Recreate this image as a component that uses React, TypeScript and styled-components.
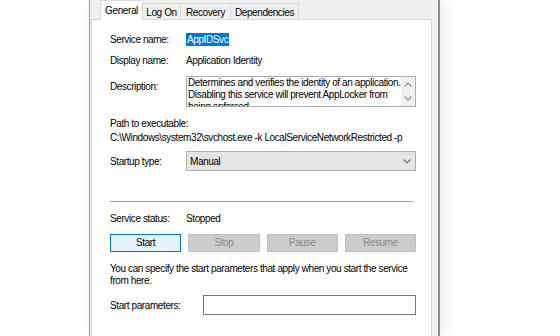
import React from "react";
import styled, { createGlobalStyle } from "styled-components";

const Global = createGlobalStyle`
  html, body { margin: 0; padding: 0; background: #ffffff; }
  body {
    font-family: "Liberation Sans", Arial, sans-serif;
    font-size: 10px;
    letter-spacing: -0.4px;
    color: #000;
  }
`;

const Window = styled.div`
  box-sizing: border-box;
  margin-left: 89px;
  width: 351px;
  height: 336px;
  border-left: 1px solid #9a9a9a;
  border-right: 2px solid #8c8c8c;
  padding: 0 6px 0 1px;
  background: #f0f0f0;
  display: flex;
  flex-direction: column;
  box-shadow: 6px 0 14px rgba(0, 0, 0, 0.07);
`;

const TabStrip = styled.div`
  display: flex;
  align-items: flex-end;
  height: 19px;
  padding-left: 9px;
  position: relative;
  z-index: 1;
`;

const Tab = styled.div<{ $active?: boolean; $w: number }>`
  box-sizing: border-box;
  width: ${(p) => p.$w}px;
  height: ${(p) => (p.$active ? 20 : 16)}px;
  margin-bottom: ${(p) => (p.$active ? -1 : 0)}px;
  border: 1px solid #d9d9d9;
  border-bottom: none;
  background: ${(p) => (p.$active ? "#ffffff" : "#f0f0f0")};
  text-align: center;
  padding-top: ${(p) => (p.$active ? 1 : 1)}px;
  line-height: ${(p) => (p.$active ? 18 : 15)}px;
  white-space: nowrap;
  position: relative;
  z-index: ${(p) => (p.$active ? 2 : 1)};
  & + & { margin-left: -1px; }
`;

const Panel = styled.div`
  flex: 1;
  background: #ffffff;
  border: 1px solid #d9d9d9;
  border-bottom: none;
  padding: 13px 15px 0 18px;
  display: flex;
  flex-direction: column;
`;

const Row = styled.div<{ $top: number; $label?: number; $start?: boolean }>`
  display: grid;
  grid-template-columns: ${(p) => p.$label ?? 76}px 1fr;
  align-items: ${(p) => (p.$start ? "start" : "center")};
  margin-top: ${(p) => p.$top}px;
  min-height: 13px;
`;

const Label = styled.div<{ $offset?: number }>`
  line-height: 13px;
  white-space: nowrap;
  margin-top: ${(p) => p.$offset ?? 0}px;
`;

const Value = styled.div`
  line-height: 13px;
  white-space: nowrap;
`;

const Selected = styled.span`
  display: inline-block;
  background: #0078d7;
  color: #ffffff;
  padding: 0 1px;
  line-height: 13px;
`;

const DescBox = styled.div`
  box-sizing: border-box;
  height: 31px;
  border: 1px solid #abadb3;
  display: flex;
  background: #ffffff;
`;

const DescText = styled.div`
  flex: 1;
  overflow: hidden;
  padding: 0 0 0 1px;
  line-height: 12px;
  white-space: nowrap;
`;

const ScrollBar = styled.div`
  width: 14px;
  background: #f0f0f0;
  display: flex;
  flex-direction: column;
`;

const ScrollBtn = styled.div`
  flex: 1;
  display: flex;
  align-items: center;
  justify-content: center;
`;

const TextLine = styled.div<{ $top?: number }>`
  line-height: 13px;
  white-space: nowrap;
  margin-top: ${(p) => p.$top ?? 0}px;
`;

const Combo = styled.div`
  box-sizing: border-box;
  height: 20px;
  background: #e5e5e5;
  border: 1px solid #adadad;
  display: flex;
  align-items: center;
  justify-content: space-between;
  padding: 0 4px 0 3px;
  line-height: 13px;
`;

const Separator = styled.div`
  height: 1px;
  background: #a0a0a0;
  margin: 30px 3px 0 0;
`;

const ButtonRow = styled.div`
  display: grid;
  grid-template-columns: repeat(4, 1fr);
  column-gap: 7px;
  margin-top: 9px;
`;

const Button = styled.div<{ $disabled?: boolean }>`
  box-sizing: border-box;
  height: 18px;
  line-height: 16px;
  text-align: center;
  border: 1px solid ${(p) => (p.$disabled ? "#bfbfbf" : "#0078d7")};
  background: ${(p) => (p.$disabled ? "#cccccc" : "#e5f1fb")};
  color: ${(p) => (p.$disabled ? "#8a8a8a" : "#000000")};
`;

const Para = styled.p`
  margin: 11px 0 0 0;
  line-height: 12px;
  white-space: nowrap;
`;

const Input = styled.div`
  box-sizing: border-box;
  height: 20px;
  border: 1px solid #7a7a7a;
  background: #ffffff;
`;

const Chevron = ({ up, color = "#707070" }: { up?: boolean; color?: string }) => (
  <svg width="8" height="5" viewBox="0 0 8 5">
    <polyline
      points={up ? "0.5,4.5 4,1 7.5,4.5" : "0.5,0.5 4,4 7.5,0.5"}
      fill="none"
      stroke={color}
      strokeWidth="1.1"
    />
  </svg>
);

export default function App() {
  return (
    <>
      <Global />
      <Window>
        <TabStrip>
          <Tab $active $w={43}>General</Tab>
          <Tab $w={39}>Log On</Tab>
          <Tab $w={51}>Recovery</Tab>
          <Tab $w={69}>Dependencies</Tab>
        </TabStrip>
        <Panel>
          <Row $top={0}>
            <Label>Service name:</Label>
            <Value>
              <Selected>AppIDSvc</Selected>
            </Value>
          </Row>
          <Row $top={8}>
            <Label>Display name:</Label>
            <Value>Application Identity</Value>
          </Row>
          <Row $top={9} $start>
            <Label $offset={4}>Description:</Label>
            <DescBox>
              <DescText>
                Determines and verifies the identity of an application.
                <br />
                Disabling this service will prevent AppLocker from
                <br />
                being enforced.
              </DescText>
              <ScrollBar>
                <ScrollBtn>
                  <Chevron up color="#8a8a8a" />
                </ScrollBtn>
                <ScrollBtn>
                  <Chevron color="#8a8a8a" />
                </ScrollBtn>
              </ScrollBar>
            </DescBox>
          </Row>
          <TextLine $top={10}>Path to executable:</TextLine>
          <TextLine $top={1}>C:\Windows\system32\svchost.exe -k LocalServiceNetworkRestricted -p</TextLine>
          <Row $top={7}>
            <Label>Startup type:</Label>
            <Combo>
              <span>Manual</span>
              <Chevron />
            </Combo>
          </Row>
          <Separator />
          <Row $top={10}>
            <Label>Service status:</Label>
            <Value>Stopped</Value>
          </Row>
          <ButtonRow>
            <Button>Start</Button>
            <Button $disabled>Stop</Button>
            <Button $disabled>Pause</Button>
            <Button $disabled>Resume</Button>
          </ButtonRow>
          <Para>
            You can specify the start parameters that apply when you start the service
            <br />
            from here.
          </Para>
          <Row $top={8} $label={93}>
            <Label>Start parameters:</Label>
            <Input />
          </Row>
        </Panel>
      </Window>
    </>
  );
}
